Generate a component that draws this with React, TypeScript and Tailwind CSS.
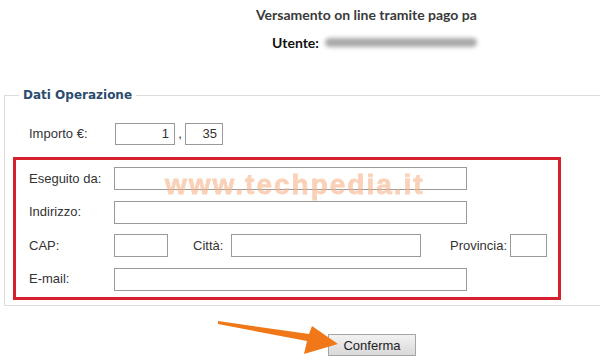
import React from "react";

function Field({ w, value }: { w: string; value?: string }) {
  return (
    <div
      className={`${w} h-[23px] border border-[#9a9a9a] bg-white text-right pr-[6px] text-[13px] leading-[21px] text-[#333]`}
    >
      {value}
    </div>
  );
}

export default function App() {
  return (
    <div
      className="relative w-[600px] h-[363px] overflow-hidden bg-white"
      style={{ fontFamily: '"Liberation Sans", Arial, sans-serif' }}
    >
      {/* header */}
      <div className="h-[87px]">
        <div
          className="pt-[6px] pl-[256px] h-[28px] text-[14px] leading-[18px] font-bold text-[#3a3a3a]"
          style={{ fontFamily: "Lato, sans-serif" }}
        >
          Versamento on line tramite pago pa
        </div>
        <div className="flex items-center h-[28px] pl-[272px]">
          <span
            className="text-[14px] font-bold text-[#111]"
            style={{ fontFamily: "Lato, sans-serif" }}
          >
            Utente:
          </span>
          <div className="ml-[6px] w-[152px] h-[9px] rounded-full bg-[#a8a8a8] blur-[2px]" />
        </div>
      </div>

      <fieldset className="ml-[4px] border border-r-0 border-[#dcdcdc] pb-[5px]">
        <legend
          className="ml-[14px] px-[4px] text-[12px] leading-[16px] font-bold text-[#2b4c6f]"
          style={{ fontFamily: '"DejaVu Sans", Verdana, sans-serif' }}
        >
          Dati Operazione
        </legend>

        <div className="mt-[20px] flex items-center h-[22px] pl-[24px] text-[13px] text-[#333]">
          <span className="w-[86px]">Importo €:</span>
          <div className="w-[60px] h-[22px] border border-[#9a9a9a] text-right pr-[5px] leading-[20px]">1</div>
          <span className="w-[10px] text-center">,</span>
          <div className="w-[38px] h-[22px] border border-[#9a9a9a] text-right pr-[5px] leading-[20px]">35</div>
        </div>

        <div className="mt-[12px] ml-[8px] w-[548px] border-[3px] border-[#d4212d] pt-[7px] pb-[6px] pl-[13px] flex flex-col gap-[10.5px] text-[13px] text-[#333]">
          <div className="flex items-center">
            <span className="w-[85px]">Eseguito da:</span>
            <Field w="w-[353px]" />
          </div>
          <div className="flex items-center">
            <span className="w-[85px]">Indirizzo:</span>
            <Field w="w-[353px]" />
          </div>
          <div className="flex items-center">
            <span className="w-[85px]">CAP:</span>
            <Field w="w-[54px]" />
            <span className="ml-[25px] w-[38px]">Città:</span>
            <Field w="w-[190px]" />
            <span className="ml-[29px] w-[60px]">Provincia:</span>
            <Field w="w-[37px]" />
          </div>
          <div className="flex items-center">
            <span className="w-[85px]">E-mail:</span>
            <Field w="w-[353px]" />
          </div>
        </div>
      </fieldset>

      <div className="mt-[27px] ml-[328px]">
        <button className="w-[88px] h-[22px] border border-[#a5a5a5] bg-gradient-to-b from-[#f2f2f2] to-[#d9d9d9] text-[13px] text-[#222]">
          Conferma
        </button>
      </div>

      {/* watermark */}
      <div
        className="absolute left-[165px] top-[164px] text-[28px] font-bold tracking-[2px] text-[#f6b48a] opacity-60 pointer-events-none"
        style={{ fontFamily: '"Liberation Sans", Arial, sans-serif', WebkitTextStroke: "0.8px #f6b48a" }}
      >
        www.techpedia.it
      </div>

      {/* arrow */}
      <svg className="absolute left-0 top-0 pointer-events-none" width="600" height="363">
        <polygon
          points="218,321 309,334 312,326 338,344 304,354 307,341 218,324"
          fill="#f07818"
          strokeLinejoin="round"
        />
      </svg>
    </div>
  );
}
